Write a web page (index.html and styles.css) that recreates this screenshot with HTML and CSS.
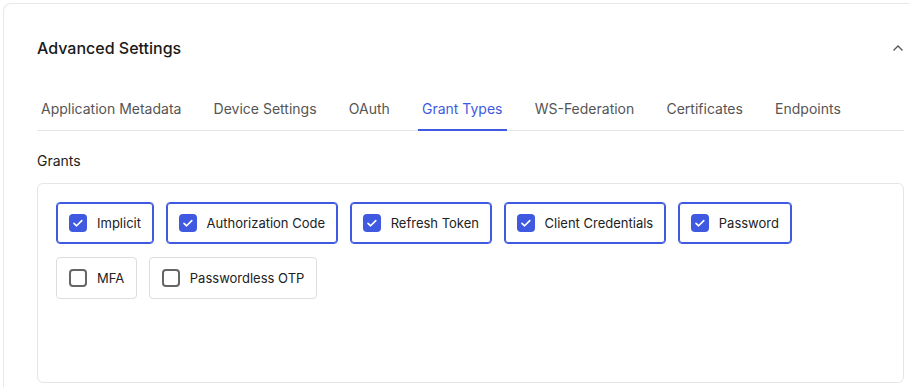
FILE: index.html
```html
<!DOCTYPE html>
<html lang="en">
<head>
  <meta charset="UTF-8" />
  <title>Advanced Settings</title>
  <meta name="viewport" content="width=device-width, initial-scale=1.0" />
  <link rel="stylesheet" href="styles.css">
</head>
<body>
  <div class="card">
    <div class="card-header">
      <h3>Advanced Settings</h3>
      <svg class="chevron" width="12" height="8" viewBox="0 0 12 8">
        <path d="M1.5 6.5 L6 2 L10.5 6.5" fill="none" stroke="#555" stroke-width="1.3" />
      </svg>
    </div>

    <div class="tabs">
      <div class="tab">Application Metadata</div>
      <div class="tab">Device Settings</div>
      <div class="tab">OAuth</div>
      <div class="tab active">Grant Types</div>
      <div class="tab">WS-Federation</div>
      <div class="tab">Certificates</div>
      <div class="tab">Endpoints</div>
    </div>

    <div class="section-label">Grants</div>

    <div class="grants-box">
      <label class="grant checked">
        <span class="box"><svg width="18" height="18" viewBox="0 0 18 18"><path d="M5 9.3 L7.6 11.8 L12.8 6.6" fill="none" stroke="#fff" stroke-width="1.6" stroke-linecap="round" stroke-linejoin="round" /></svg></span>
        Implicit
      </label>
      <label class="grant checked">
        <span class="box"><svg width="18" height="18" viewBox="0 0 18 18"><path d="M5 9.3 L7.6 11.8 L12.8 6.6" fill="none" stroke="#fff" stroke-width="1.6" stroke-linecap="round" stroke-linejoin="round" /></svg></span>
        Authorization Code
      </label>
      <label class="grant checked">
        <span class="box"><svg width="18" height="18" viewBox="0 0 18 18"><path d="M5 9.3 L7.6 11.8 L12.8 6.6" fill="none" stroke="#fff" stroke-width="1.6" stroke-linecap="round" stroke-linejoin="round" /></svg></span>
        Refresh Token
      </label>
      <label class="grant checked">
        <span class="box"><svg width="18" height="18" viewBox="0 0 18 18"><path d="M5 9.3 L7.6 11.8 L12.8 6.6" fill="none" stroke="#fff" stroke-width="1.6" stroke-linecap="round" stroke-linejoin="round" /></svg></span>
        Client Credentials
      </label>
      <label class="grant checked">
        <span class="box"><svg width="18" height="18" viewBox="0 0 18 18"><path d="M5 9.3 L7.6 11.8 L12.8 6.6" fill="none" stroke="#fff" stroke-width="1.6" stroke-linecap="round" stroke-linejoin="round" /></svg></span>
        Password
      </label>
      <label class="grant">
        <span class="box"></span>
        MFA
      </label>
      <label class="grant">
        <span class="box"></span>
        Passwordless OTP
      </label>
    </div>
  </div>
</body>
</html>
```

FILE: styles.css
```css
html, body {
  height: 387px;
  overflow: hidden;
}
body {
  margin: 0;
  padding: 3px 0 0 3px;
  box-sizing: border-box;
  background: #fff;
  color: #222;
  font-family: Inter, 'Noto Sans', sans-serif;
}
.card {
  width: 934px;
  height: 384px;
  box-sizing: border-box;
  border: 1px solid #e8e8e8;
  border-bottom: none;
  border-radius: 8px 8px 0 0;
  padding: 0 32px 0 33px;
  overflow: hidden;
}
.card-header {
  display: flex;
  align-items: center;
  justify-content: space-between;
  height: 88px;
}
.card-header h3 {
  margin: 0;
  font-size: 16px;
  font-weight: 500;
  color: #1a1a1a;
}
.tabs {
  display: flex;
  gap: 24.2px;
  border-bottom: 1px solid #e5e5e5;
  margin-bottom: 20px;
}
.tab {
  padding: 7px 4px 10px;
  font-size: 14px;
  line-height: 20px;
  color: #555;
  border-bottom: 2px solid transparent;
  margin-bottom: -1px;
}
.tab.active {
  color: #3f5ae0;
  border-bottom-color: #3f5ae0;
}
.section-label {
  font-size: 14px;
  line-height: 20px;
  color: #222;
  margin-bottom: 12px;
}
.grants-box {
  display: flex;
  flex-wrap: wrap;
  align-content: flex-start;
  gap: 13px 12px;
  border: 1px solid #e5e5e5;
  border-radius: 6px;
  padding: 18px 60px 18px 18px;
  height: 200px;
  box-sizing: border-box;
}
.grant {
  display: flex;
  align-items: center;
  gap: 10px;
  height: 42px;
  box-sizing: border-box;
  padding: 0 11.6px 0 12px;
  border: 1px solid #ddd;
  border-radius: 4px;
  font-size: 13px;
  color: #222;
  cursor: pointer;
}
.grant.checked {
  border-color: #3f5ae0;
  box-shadow: inset 0 0 0 1px #3f5ae0;
}
.box {
  width: 18px;
  height: 18px;
  box-sizing: border-box;
  border: 2px solid #666;
  border-radius: 4px;
  display: flex;
}
.grant.checked .box {
  border: none;
  background: #3f5ae0;
}
```
